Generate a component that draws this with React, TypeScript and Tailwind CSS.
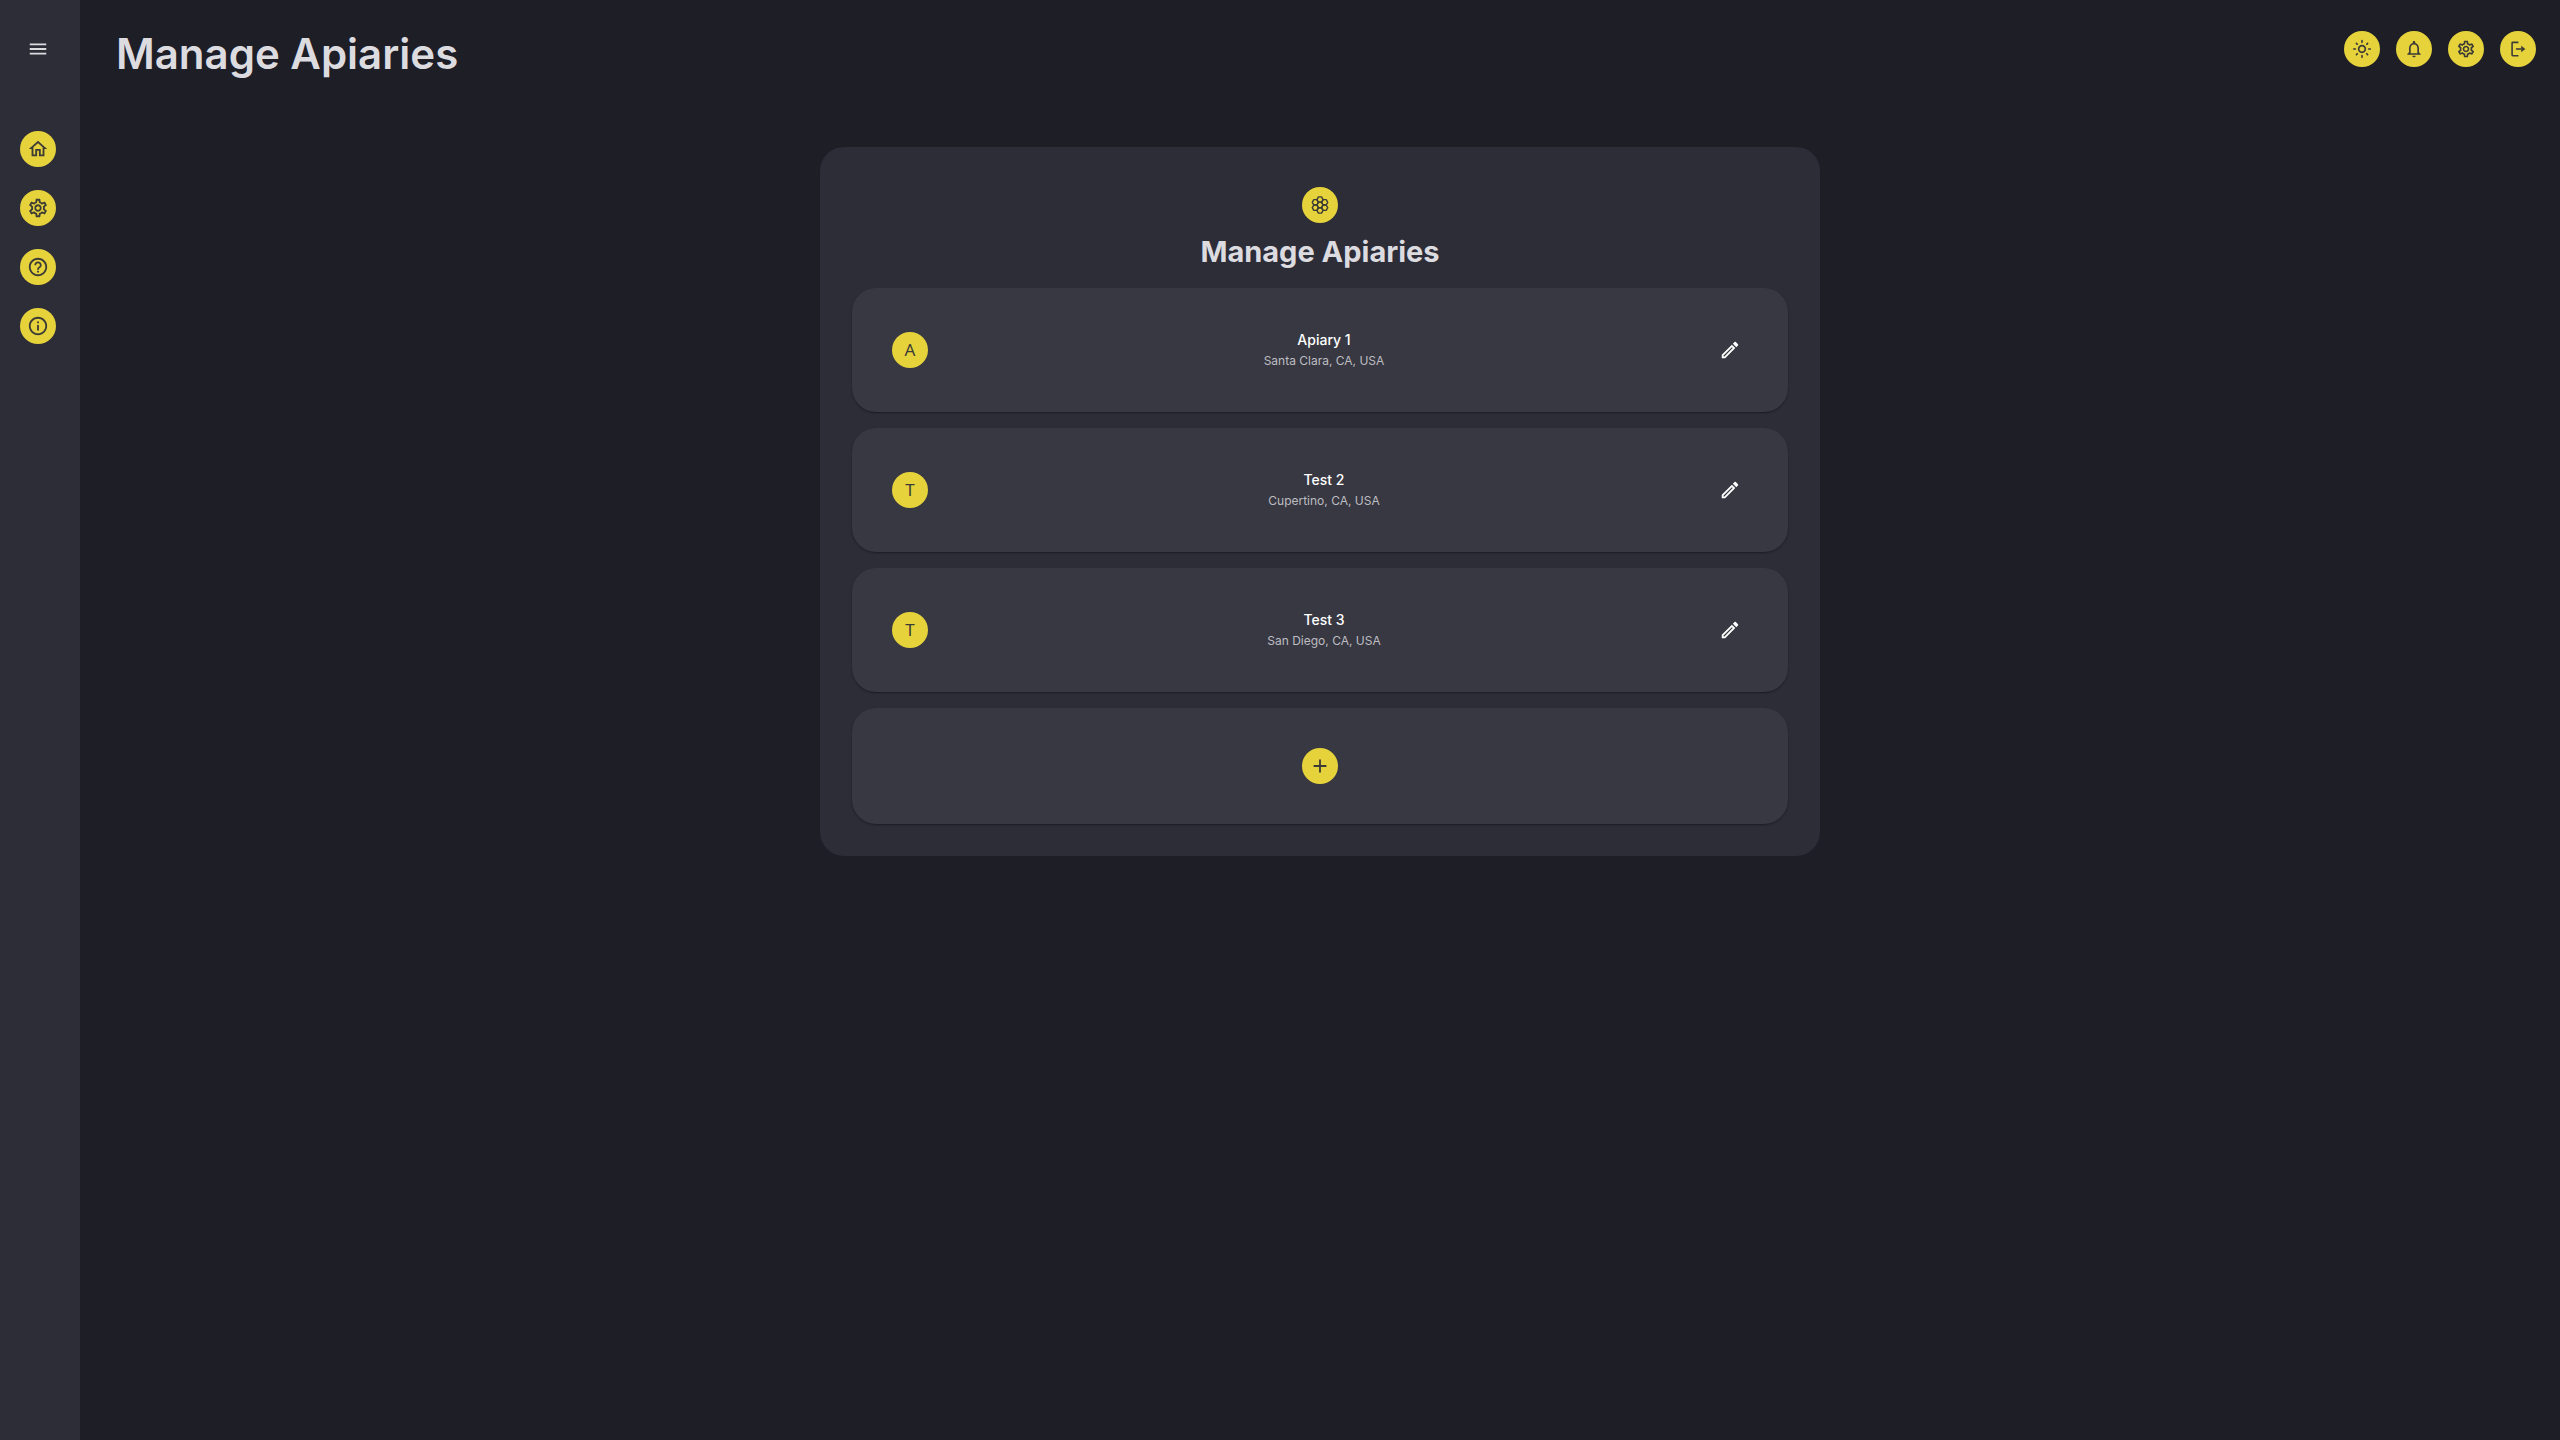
import type { ComponentType, ReactNode } from "react";
import {
  MdAdd,
  MdInfoOutline,
  MdHelpOutline,
  MdMenu,
  MdNotificationsNone,
  MdOutlineEdit,
  MdOutlineHome,
  MdOutlineLightMode,
  MdOutlineSettings,
} from "react-icons/md";

type IconProps = { className?: string };

const apiaries = [
  { name: "Apiary 1", place: "Santa Clara, CA, USA" },
  { name: "Test 2", place: "Cupertino, CA, USA" },
  { name: "Test 3", place: "San Diego, CA, USA" },
];

const navItems: { label: string; Icon: ComponentType<IconProps> }[] = [
  { label: "Home", Icon: MdOutlineHome },
  { label: "Settings", Icon: MdOutlineSettings },
  { label: "Help", Icon: MdHelpOutline },
  { label: "About", Icon: MdInfoOutline },
];

const actions: { label: string; Icon: ComponentType<IconProps> }[] = [
  { label: "Toggle theme", Icon: MdOutlineLightMode },
  { label: "Notifications", Icon: MdNotificationsNone },
  { label: "Account settings", Icon: MdOutlineSettings },
  { label: "Log out", Icon: LogoutIcon },
];

function LogoutIcon({ className }: IconProps) {
  return (
    <svg viewBox="0 0 24 24" fill="none" className={className} aria-hidden="true">
      <path
        d="M12.500 4H5.700a.8.8 0 0 0-.8.8v14.400a.8.8 0 0 0 .8.8h6.800"
        stroke="currentColor"
        strokeWidth="1.900"
      />
      <path d="M9.500 12h9" stroke="currentColor" strokeWidth="1.900" />
      <path d="M15.800 8l5 4l-5 4v-2.600l1.400-1.400l-1.400-1.400z" fill="currentColor" />
    </svg>
  );
}

function HoneycombIcon({ className }: IconProps) {
  const cells = [
    [12, 12],
    [12, 4.800],
    [12, 19.200],
    [5.800, 8.400],
    [18.200, 8.400],
    [5.800, 15.600],
    [18.200, 15.600],
  ];
  return (
    <svg viewBox="0 0 24 24" fill="none" className={className} aria-hidden="true">
      {cells.map(([x, y]) => (
        <path
          key={`${x}-${y}`}
          d={`M${x - 4.1} ${y}l2.050-3.600h4.100l2.050 3.600l-2.050 3.600h-4.100z`}
          stroke="currentColor"
          strokeWidth="1.900"
          strokeLinejoin="round"
        />
      ))}
    </svg>
  );
}

function RoundButton({ label, children }: { label: string; children: ReactNode }) {
  return (
    <button
      type="button"
      aria-label={label}
      className="flex size-9 shrink-0 items-center justify-center rounded-full bg-[#e6d33c] text-[#3c3b36]"
    >
      {children}
    </button>
  );
}

function Sidebar() {
  return (
    <aside className="w-20 shrink-0 bg-[#2d2d38] px-5 pt-[31px]">
      <button
        type="button"
        aria-label="Toggle menu"
        className="flex size-9 items-center justify-center text-[#dcdce0]"
      >
        <MdMenu className="size-[22px]" />
      </button>
      <nav className="mt-16 flex flex-col gap-[23px]">
        {navItems.map(({ label, Icon }) => (
          <RoundButton key={label} label={label}>
            <Icon className="size-[22px]" />
          </RoundButton>
        ))}
      </nav>
    </aside>
  );
}

function ApiaryRow({ name, place }: { name: string; place: string }) {
  return (
    <li className="flex items-center rounded-3xl bg-[#383842] p-10 shadow-[0_1px_2px_rgba(0,0,0,0.4)]">
      <span className="flex size-9 shrink-0 items-center justify-center rounded-full bg-[#e6d33c] font-['Noto_Sans',sans-serif] text-[17px] text-[#3c3b36]">
        {name[0]}
      </span>
      <div className="ml-2 flex-1 pt-0.5 pb-px text-center">
        <h3 className="text-sm leading-5 font-medium text-white">{name}</h3>
        <p className="text-xs leading-[21px] text-[#bdbdc1]">{place}</p>
      </div>
      <button
        type="button"
        aria-label={`Edit ${name}`}
        className="flex size-9 shrink-0 items-center justify-center text-white"
      >
        <MdOutlineEdit className="size-[22px]" />
      </button>
    </li>
  );
}

export default function App() {
  return (
    <div className="flex min-h-screen bg-[#1e1e27] font-['Inter',sans-serif] text-[#dcdce0]">
      <Sidebar />
      <div className="min-w-0 flex-1">
        <header className="flex items-start justify-between pt-[23px] pr-6 pl-9">
          <h1 className="text-[42px] leading-[62px] font-semibold">Manage Apiaries</h1>
          <div className="mt-2 flex gap-4">
            {actions.map(({ label, Icon }) => (
              <RoundButton key={label} label={label}>
                <Icon className="size-5" />
              </RoundButton>
            ))}
          </div>
        </header>
        <main className="px-6 pt-[62px] pb-8">
          <section className="mx-auto max-w-[1000px] rounded-3xl bg-[#2d2d38] px-8 pt-10 pb-8">
            <div className="flex flex-col items-center">
              <span className="flex size-9 items-center justify-center rounded-full bg-[#e6d33c] text-[#3c3b36]">
                <HoneycombIcon className="size-[18px]" />
              </span>
              <h2 className="mt-2 text-[29px] leading-[41px] font-bold">Manage Apiaries</h2>
            </div>
            <ul className="mt-4 flex flex-col gap-4">
              {apiaries.map((apiary) => (
                <ApiaryRow key={apiary.name} {...apiary} />
              ))}
              <li className="flex justify-center rounded-3xl bg-[#383842] p-10 shadow-[0_1px_2px_rgba(0,0,0,0.4)]">
                <RoundButton label="Add apiary">
                  <MdAdd className="size-[22px]" />
                </RoundButton>
              </li>
            </ul>
          </section>
        </main>
      </div>
    </div>
  );
}
